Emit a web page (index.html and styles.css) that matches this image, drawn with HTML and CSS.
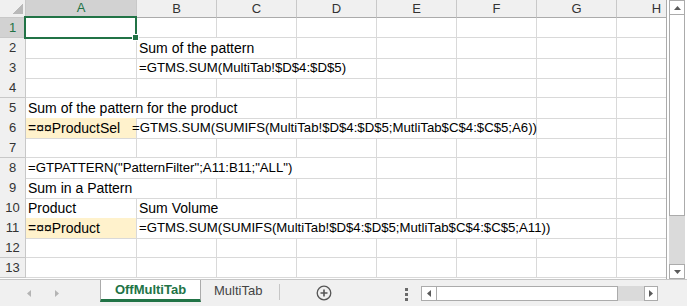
FILE: index.html
```html
<!DOCTYPE html>
<html lang="en">
<head>
    <meta charset="UTF-8">
    <title>OffMultiTab</title>
    <link rel="stylesheet" href="styles.css">
</head>
<body>
    <div class="top">
        <div class="grid">
            <div class="hrow">
                <div class="corner"><span class="tri"></span></div>
                <div class="ch sel">A</div>
                <div class="ch">B</div>
                <div class="ch">C</div>
                <div class="ch">D</div>
                <div class="ch">E</div>
                <div class="ch">F</div>
                <div class="ch">G</div>
                <div class="ch">H</div>
            </div>

            <div class="row">
                <div class="rh sel">1</div>
                <div class="c"></div><div class="c"></div><div class="c"></div><div class="c"></div>
                <div class="c"></div><div class="c"></div><div class="c"></div><div class="c"></div>
            </div>
            <div class="row">
                <div class="rh">2</div>
                <div class="c"></div>
                <div class="c span2">Sum of the pattern</div>
                <div class="c"></div><div class="c"></div><div class="c"></div><div class="c"></div>
                <div class="c"></div>
            </div>
            <div class="row">
                <div class="rh">3</div>
                <div class="c"></div>
                <div class="c f span3">=GTMS.SUM(MultiTab!$D$4:$D$5)</div>
                <div class="c"></div><div class="c"></div><div class="c"></div><div class="c"></div>
            </div>
            <div class="row">
                <div class="rh">4</div>
                <div class="c"></div><div class="c"></div><div class="c"></div><div class="c"></div>
                <div class="c"></div><div class="c"></div><div class="c"></div><div class="c"></div>
            </div>
            <div class="row">
                <div class="rh">5</div>
                <div class="c span3">Sum of the pattern for the product</div>
                <div class="c"></div><div class="c"></div><div class="c"></div><div class="c"></div>
                <div class="c"></div>
            </div>
            <div class="row">
                <div class="rh">6</div>
                <div class="c hl">=¤¤ProductSel</div>
                <div class="c f span5 pull">=GTMS.SUM(SUMIFS(MultiTab!$D$4:$D$5;MutliTab$C$4:$C$5;A6))</div>
                <div class="c"></div><div class="c"></div>
            </div>
            <div class="row">
                <div class="rh">7</div>
                <div class="c"></div><div class="c"></div><div class="c"></div><div class="c"></div>
                <div class="c"></div><div class="c"></div><div class="c"></div><div class="c"></div>
            </div>
            <div class="row">
                <div class="rh">8</div>
                <div class="c f span4">=GTPATTERN("PatternFilter";A11:B11;"ALL")</div>
                <div class="c"></div><div class="c"></div><div class="c"></div><div class="c"></div>
            </div>
            <div class="row">
                <div class="rh">9</div>
                <div class="c span2">Sum in a Pattern</div>
                <div class="c"></div><div class="c"></div><div class="c"></div><div class="c"></div>
                <div class="c"></div><div class="c"></div>
            </div>
            <div class="row">
                <div class="rh">10</div>
                <div class="c">Product</div>
                <div class="c span2">Sum Volume</div>
                <div class="c"></div><div class="c"></div><div class="c"></div><div class="c"></div>
                <div class="c"></div>
            </div>
            <div class="row">
                <div class="rh">11</div>
                <div class="c hl">=¤¤Product</div>
                <div class="c f span6">=GTMS.SUM(SUMIFS(MultiTab!$D$4:$D$5;MutliTab$C$4:$C$5;A11))</div>
                <div class="c"></div>
            </div>
            <div class="row">
                <div class="rh">12</div>
                <div class="c"></div><div class="c"></div><div class="c"></div><div class="c"></div>
                <div class="c"></div><div class="c"></div><div class="c"></div><div class="c"></div>
            </div>
            <div class="row">
                <div class="rh">13</div>
                <div class="c"></div><div class="c"></div><div class="c"></div><div class="c"></div>
                <div class="c"></div><div class="c"></div><div class="c"></div><div class="c"></div>
            </div>

            <!-- active cell A1 -->
            <div class="selection"></div>
            <div class="handle"></div>
        </div>

        <div class="vside">
            <div class="vbar">
                <div class="sbtn">
                    <svg width="7" height="4" viewBox="0 0 7 4"><path d="M0 4 L3.5 0 L7 4 Z" fill="#5a5a5a"/></svg>
                </div>
                <div class="vthumb"></div>
                <div class="vtrack"></div>
                <div class="sbtn">
                    <svg width="7" height="4" viewBox="0 0 7 4"><path d="M0 0 L3.5 4 L7 0 Z" fill="#5a5a5a"/></svg>
                </div>
            </div>
        </div>
    </div>

    <div class="tabbar">
        <div class="nav">
            <svg width="4" height="7" viewBox="0 0 4 7"><path d="M4 0 L0 3.5 L4 7 Z" fill="#b4b4b4"/></svg>
            <svg width="4" height="7" viewBox="0 0 4 7"><path d="M0 0 L4 3.5 L0 7 Z" fill="#b4b4b4"/></svg>
        </div>
        <div class="tab active">OffMultiTab</div>
        <div class="tab">MultiTab</div>
        <div class="sep"></div>
        <div class="add">
            <svg width="16" height="16" viewBox="0 0 16 16">
                <circle cx="8" cy="8" r="6.8" fill="none" stroke="#555" stroke-width="1.3"/>
                <path d="M8 4.5 V11.5 M4.5 8 H11.5" stroke="#555" stroke-width="1.6"/>
            </svg>
        </div>
        <div class="dots">
            <svg width="3" height="13" viewBox="0 0 3 13">
                <rect x="0" y="0" width="3" height="3" fill="#6a6a6a"/>
                <rect x="0" y="5" width="3" height="3" fill="#6a6a6a"/>
                <rect x="0" y="10" width="3" height="3" fill="#6a6a6a"/>
            </svg>
        </div>
        <div class="hbar">
            <div class="hbtn">
                <svg width="4" height="7" viewBox="0 0 4 7"><path d="M4 0 L0 3.5 L4 7 Z" fill="#5a5a5a"/></svg>
            </div>
            <div class="hthumb"></div>
            <div class="htrack"></div>
            <div class="hbtn right">
                <svg width="4" height="7" viewBox="0 0 4 7"><path d="M0 0 L4 3.5 L0 7 Z" fill="#5a5a5a"/></svg>
            </div>
        </div>
    </div>
</body>
</html>
```

FILE: styles.css
```css
body {
    margin: 0;
    width: 687px;
    height: 306px;
    overflow: hidden;
    background-color: #f0f0f0;
    font-family: "Liberation Sans", Arial, sans-serif;
    color: #000;
}
.top {
    display: flex;
    height: 279px;
}
.grid {
    position: relative;
    width: 667px;
    height: 279px;
    overflow: hidden;
    background-color: #fff;
    border-right: 1px solid #ababab;
    box-sizing: border-box;
}
.hrow,
.row {
    display: grid;
    grid-template-columns: 26px 111px repeat(7, 80px);
}
.hrow {
    height: 18px;
}
.row {
    height: 20px;
}
.corner,
.ch,
.rh {
    background-color: #f0f0f0;
    color: #333;
    font-size: 13px;
    box-sizing: border-box;
    text-align: center;
    border-right: 1px solid #c8c8c8;
    border-bottom: 1px solid #c8c8c8;
}
.corner {
    display: flex;
    justify-content: flex-end;
    align-items: flex-end;
    padding: 0 2px 3px 0;
}
.tri {
    width: 11px;
    height: 11px;
    background: linear-gradient(to top left, #b9b9b9 50%, transparent 50%);
}
.ch {
    line-height: 17px;
    border-bottom-color: #ababab;
}
.rh {
    line-height: 19px;
}
.ch.sel,
.rh.sel {
    background-color: #d2d2d2;
    color: #217346;
}
.ch.sel {
    border-bottom: 2px solid #217346;
    line-height: 16px;
}
.c {
    box-sizing: border-box;
    border-right: 1px solid #d9d9d9;
    border-bottom: 1px solid #d9d9d9;
    padding-left: 2px;
    font-size: 14px;
    line-height: 20px;
    white-space: nowrap;
    overflow: visible;
}
/* formulas: digits and symbols run narrower in the sheet font */
.c.f {
    font-size: 13.2px;
}
.span2 { grid-column: span 2; }
.span3 { grid-column: span 3; }
.span4 { grid-column: span 4; }
.span5 { grid-column: span 5; }
.span6 { grid-column: span 6; }
.hl {
    background-color: #fff2cc;
}
.pull {
    text-indent: -7px;
}
.selection {
    position: absolute;
    left: 24px;
    top: 16px;
    width: 113px;
    height: 23px;
    border: 2px solid #217346;
    box-sizing: border-box;
}
.handle {
    position: absolute;
    left: 132px;
    top: 34px;
    width: 7px;
    height: 7px;
    background-color: #217346;
    border: 1px solid #fff;
    box-sizing: border-box;
}

/* vertical scroll bar */
.vside {
    width: 20px;
    background-color: #fff;
}
.vbar {
    display: flex;
    flex-direction: column;
    width: 16px;
    height: 279px;
    margin-left: 2px;
}
.sbtn,
.hbtn {
    display: flex;
    align-items: center;
    justify-content: center;
    background-color: #fff;
    border: 1px solid #ababab;
    box-sizing: border-box;
}
.sbtn {
    height: 15px;
}
.vthumb {
    height: 200px;
    background-color: #fff;
    border-left: 1px solid #ababab;
    border-right: 1px solid #ababab;
    border-bottom: 1px solid #ababab;
}
.vtrack {
    flex: 1;
    background-color: #dadada;
}

/* sheet tabs */
.tabbar {
    display: flex;
    align-items: flex-start;
    height: 27px;
    border-top: 1px solid #c6c6c6;
    box-sizing: border-box;
    background-color: #f0f0f0;
}
.nav {
    display: flex;
    gap: 24px;
    width: 100px;
    padding: 10px 0 0 27px;
    box-sizing: border-box;
}
.tab {
    height: 22px;
    line-height: 22px;
    font-size: 13px;
    color: #444;
    box-sizing: border-box;
}
.tab.active {
    width: 101px;
    text-align: center;
    background-color: #fff;
    color: #217346;
    font-weight: bold;
    border-left: 1px solid #ababab;
    border-right: 1px solid #ababab;
    border-bottom: 3px solid #217346;
    line-height: 20px;
}
.tab:not(.active) {
    width: 78px;
    padding-left: 13px;
}
.sep {
    width: 1px;
    height: 16px;
    margin-top: 4px;
    background-color: #c6c6c6;
}
.add {
    margin: 5px 0 0 36px;
}
.dots {
    margin: 7px 0 0 73px;
}
.hbar {
    display: flex;
    width: 237px;
    height: 15px;
    margin: 6px 0 0 13px;
}
.hbtn {
    width: 16px;
}
.hthumb {
    width: 180px;
    background-color: #fff;
    border-top: 1px solid #ababab;
    border-bottom: 1px solid #ababab;
    border-right: 1px solid #ababab;
}
.htrack {
    flex: 1;
    background-color: #dadada;
}
.hbtn.right {
    width: 14px;
}
```
